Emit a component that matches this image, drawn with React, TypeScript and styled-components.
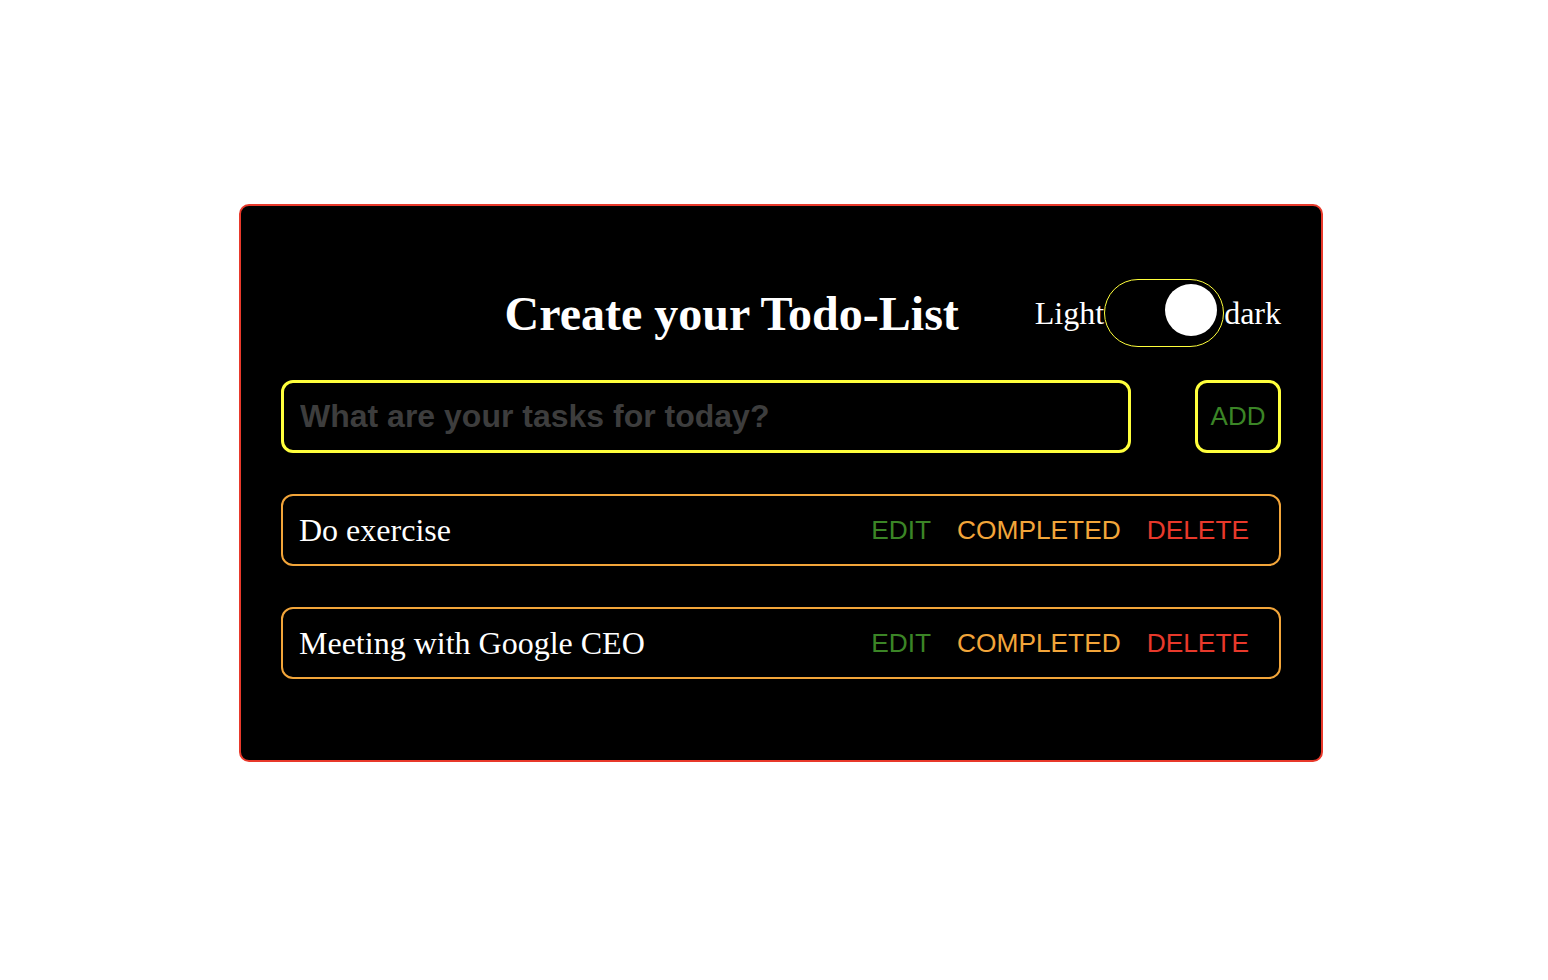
import React, { useState } from "react";
import styled, { createGlobalStyle } from "styled-components";

const GlobalStyle = createGlobalStyle`
	body {
		margin: 0;
		background: #ffffff;
		font-family: "Liberation Serif", "Times New Roman", serif;
	}
`;

const colors = {
	red: "#e8392b",
	yellow: "#ffff3c",
	orange: "#f2a53a",
	green: "#3b8526",
	placeholder: "#3d3d3d",
};

const Page = styled.div`
	padding: 204px 0 0 239px;
`;

const Card = styled.div`
	width: 1000px;
	padding: 73px 40px 81px;
	background: #000;
	border: 2px solid ${colors.red};
	border-radius: 10px;
	display: flex;
	flex-direction: column;
	gap: 41px;
`;

const Header = styled.div`
	display: flex;
	align-items: center;
	justify-content: flex-end;
	gap: 76px;
	margin-bottom: -8px;
`;

const Title = styled.h1`
	margin: 0;
	font-size: 48px;
	font-weight: bold;
	color: #fff;
	font-family: "Liberation Serif", "Times New Roman", serif;
`;

const ToggleWrap = styled.div`
	display: flex;
	align-items: center;
	color: #fff;
	font-size: 32px;
`;

const Switch = styled.button<{ $on: boolean }>`
	width: 120px;
	height: 68px;
	padding: 0;
	border: 1px solid ${colors.yellow};
	border-radius: 34px;
	background: #000;
	position: relative;
	cursor: pointer;

	&::after {
		content: "";
		position: absolute;
		top: 4px;
		left: ${(p) => (p.$on ? "60px" : "8px")};
		width: 52px;
		height: 52px;
		border-radius: 50%;
		background: #fff;
	}
`;

const InputRow = styled.div`
	display: flex;
	gap: 64px;
`;

const TaskInput = styled.input`
	flex: 1;
	height: 73px;
	box-sizing: border-box;
	padding: 0 16px;
	background: #000;
	border: 3px solid ${colors.yellow};
	border-radius: 12px;
	color: #fff;
	font-family: "Liberation Sans", Arial, sans-serif;
	font-size: 32px;
	font-weight: bold;
	outline: none;

	&::placeholder {
		color: ${colors.placeholder};
	}
`;

const AddButton = styled.button`
	width: 86px;
	height: 73px;
	background: #000;
	border: 3px solid ${colors.yellow};
	border-radius: 12px;
	color: ${colors.green};
	font-family: "Liberation Sans", Arial, sans-serif;
	font-size: 26px;
	padding: 0;
	cursor: pointer;
`;

const TodoItem = styled.div`
	height: 72px;
	box-sizing: border-box;
	display: flex;
	align-items: center;
	justify-content: space-between;
	padding: 0 17px 0 16px;
	border: 2px solid ${colors.orange};
	border-radius: 12px;
	color: #fff;
	font-size: 32px;
`;

const Actions = styled.div`
	display: flex;
`;

const ActionButton = styled.button<{ $color: string }>`
	background: none;
	border: none;
	padding: 0 13px;
	color: ${(p) => p.$color};
	font-family: "Liberation Sans", Arial, sans-serif;
	font-size: 26.3px;
	cursor: pointer;
`;

const todos = ["Do exercise", "Meeting with Google CEO"];

export default function App() {
	const [dark, setDark] = useState(true);

	return (
		<Page>
			<GlobalStyle />
			<Card>
				<Header>
					<Title>Create your Todo-List</Title>
					<ToggleWrap>
						Light
						<Switch $on={dark} onClick={() => setDark(!dark)} />
						dark
					</ToggleWrap>
				</Header>
				<InputRow>
					<TaskInput placeholder="What are your tasks for today?" />
					<AddButton>ADD</AddButton>
				</InputRow>
				{todos.map((todo) => (
					<TodoItem key={todo}>
						{todo}
						<Actions>
							<ActionButton $color={colors.green}>EDIT</ActionButton>
							<ActionButton $color={colors.orange}>COMPLETED</ActionButton>
							<ActionButton $color={colors.red}>DELETE</ActionButton>
						</Actions>
					</TodoItem>
				))}
			</Card>
		</Page>
	);
}
